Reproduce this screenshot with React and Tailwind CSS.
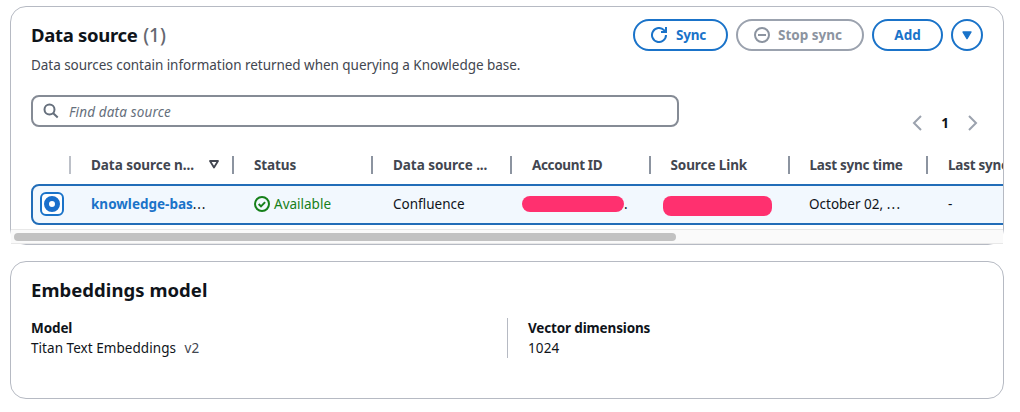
const columns = [
  { label: "Data source n", dots: true, width: "w-[163px]", tracking: "tracking-[-0.05px]", sorted: true },
  { label: "Status", width: "w-[139px]", tracking: "tracking-[-0.1px]" },
  { label: "Data source ", dots: true, width: "w-[139px]", tracking: "tracking-[-0.05px]" },
  { label: "Account ID", width: "w-[138.5px]", tracking: "tracking-[-0.35px]" },
  { label: "Source Link", width: "w-[139px]", tracking: "tracking-[-0.1px]" },
  { label: "Last sync time", width: "w-[138.5px]", tracking: "tracking-[-0.25px]" },
];

function Divider() {
  return <span className="h-[18px] w-[2px] shrink-0 bg-[#8c94a0]" />;
}

function Header() {
  return (
    <div className="flex h-8 items-center justify-between">
      <h2 className="text-[18.5px] font-bold tracking-[-0.3px] text-[#0f141a]">
        Data source <span className="ml-px text-[19px] font-medium tracking-normal text-[#656871]">(1)</span>
      </h2>
      <div className="flex gap-2 text-[13.5px] font-bold">
        <button className="flex h-8 w-[95px] items-center rounded-full border-2 border-[#1a73c9] pl-4 text-[#1a73c9]">
          <svg width="16" height="16" viewBox="0 0 16 16" fill="none" stroke="currentColor" strokeWidth="2">
            <path d="M15 8a7 7 0 1 1-2-4.9l1.5 1.8" />
            <path d="M10 5h5V0" />
          </svg>
          <span className="ml-[9px] pt-px tracking-[-0.2px]">Sync</span>
        </button>
        <button className="flex h-8 w-32 items-center rounded-full border-2 border-[#9ba2ae] pl-4 text-[#8c94a0]">
          <svg width="16" height="16" viewBox="0 0 16 16" fill="none" stroke="currentColor" strokeWidth="2">
            <circle cx="8" cy="8" r="7" />
            <path d="M4 8h8" />
          </svg>
          <span className="ml-2 pt-px whitespace-nowrap">Stop sync</span>
        </button>
        <button className="flex h-8 w-[71px] items-center justify-center rounded-full border-2 border-[#1a73c9] pt-px text-[#1a73c9]">
          Add
        </button>
        <button className="flex h-8 w-8 items-center justify-center rounded-full border-2 border-[#1a73c9] text-[#1a73c9]">
          <svg width="10" height="9" viewBox="0 0 10 9" fill="currentColor" stroke="currentColor" strokeWidth="1.4" strokeLinejoin="round">
            <path d="M1 1h8L5 7.6z" />
          </svg>
        </button>
      </div>
    </div>
  );
}

function Toolbar() {
  return (
    <div className="mt-[20px] flex">
      <div className="flex h-8 w-[648px] items-center rounded-lg border-2 border-[#858b95] pl-[10px]">
        <svg width="16" height="16" viewBox="0 0 16 16" fill="none" stroke="#656f7c" strokeWidth="2">
          <circle cx="6.5" cy="6.5" r="5" />
          <path d="M10.2 10.2l4.5 4.3" />
        </svg>
        <span className="ml-[10px] pt-[2px] text-[13.5px] tracking-[0.15px] text-[#656f7c] italic">Find data source</span>
      </div>
      <div className="mt-[12px] ml-[233px] flex h-8 items-center">
        <svg width="10" height="16" viewBox="0 0 10 16" fill="none" stroke="#9ba2ae" strokeWidth="2">
          <path d="M9 1L2 8l7 7" />
        </svg>
        <span className="w-[46px] text-center text-[13.5px] font-bold text-[#0f141a]">1</span>
        <svg width="10" height="16" viewBox="0 0 10 16" fill="none" stroke="#9ba2ae" strokeWidth="2">
          <path d="M1 1l7 7-7 7" />
        </svg>
      </div>
    </div>
  );
}

function TableHead() {
  return (
    <div className="flex h-[39px] w-[1100px] items-center pl-[38px] text-[13.5px] font-bold whitespace-nowrap text-[#424650]">
      <span className="h-[18px] w-[2px] shrink-0 bg-[#bcc0c8]" />
      {columns.map((column) => (
        <div
          key={column.label}
          className={`flex shrink-0 items-center justify-between pl-5 ${column.width} ${column.tracking}`}
        >
          <span className="pt-[2px] whitespace-pre">
            {column.label}
            {column.dots && "..."}
          </span>
          <div className="flex items-center gap-[13px]">
            {column.sorted && (
              <svg width="10" height="9" viewBox="0 0 10 9" fill="none" stroke="#424650" strokeWidth="1.8" strokeLinejoin="round">
                <path d="M1 1h8L5 7.5z" />
              </svg>
            )}
            <Divider />
          </div>
        </div>
      ))}
      <span className="pt-[2px] pl-5 tracking-[-0.25px]">Last sync</span>
    </div>
  );
}

function TableRow() {
  return (
    <div className="flex h-[41px] w-[1100px] items-center rounded-lg border-2 border-[#226db8] bg-[#f2f8fe] pb-px text-[13.5px] whitespace-nowrap text-[#0f141a]">
      <div className="ml-[7px] flex h-6 w-6 shrink-0 items-center justify-center rounded-md border-2 border-[#1a73c9] bg-white">
        <span className="h-4 w-4 rounded-full border-[5px] border-[#1a6fcb] bg-white" />
      </div>
      <div className="ml-[27px] w-[163px] shrink-0">
        <span className="font-bold text-[#1a73c9]">knowledge-bas</span>
        <span className="tracking-[0.9px]">...</span>
      </div>
      <div className="flex w-[139px] shrink-0 items-center gap-1 text-[#16801a]">
        <svg width="16" height="16" viewBox="0 0 16 16" fill="none" stroke="currentColor" strokeWidth="2">
          <circle cx="8" cy="8" r="7" />
          <path d="M4.7 8l2.3 2.4 4.1-4.3" />
        </svg>
        Available
      </div>
      <div className="w-[129px] shrink-0">Confluence</div>
      <div className="flex w-[141px] shrink-0 items-center">
        <span className="h-4 w-[102px] rounded-lg bg-[#ff306f]" />.
      </div>
      <div className="w-[146px] shrink-0">
        <div className="mt-[4px] h-5 w-[109px] rounded-lg bg-[#ff306f]" />
      </div>
      <div className="w-[139px] shrink-0">
        October 02, <span className="tracking-[1.3px]">...</span>
      </div>
      <div>-</div>
    </div>
  );
}

export default function App() {
  return (
    <main className="h-[412px] overflow-hidden bg-white px-[10px] pt-[6px] font-['Noto_Sans',sans-serif]">
      <section className="flex h-[239px] w-[994px] flex-col rounded-2xl border border-[#b6bac3]">
        <div className="px-5 pt-3">
          <Header />
          <p className="mt-[4px] text-[13.5px] leading-5 tracking-[-0.04px] text-[#424650]">
            Data sources contain information returned when querying a Knowledge base.
          </p>
          <Toolbar />
        </div>
        <div className="mt-[6px] overflow-hidden pl-5">
          <TableHead />
          <TableRow />
        </div>
        <div className="mt-1 flex h-[15px] shrink-0 items-center border-y border-[#e8e8e8] bg-[#fafafa] pl-[3px]">
          <div className="h-2 w-[662px] rounded-full bg-[#c2c2c2]" />
        </div>
      </section>
      <section className="mt-4 h-[138px] w-[994px] rounded-2xl border border-[#b6bac3] px-5 pt-[14px] text-[#0f141a]">
        <h2 className="text-[18.5px] leading-7 font-bold tracking-[0.05px]">Embeddings model</h2>
        <div className="mt-[14px] flex h-10 text-[13.5px] leading-5">
          <div className="w-[476px]">
            <h3 className="font-bold tracking-[-0.1px]">Model</h3>
            <p className="tracking-[0.05px]">
              Titan Text Embeddings <span className="ml-[5px] text-[#424650]">v2</span>
            </p>
          </div>
          <div className="border-l border-[#b6bac3] pl-5">
            <h3 className="font-bold tracking-[-0.15px]">Vector dimensions</h3>
            <p className="tracking-[0.1px]">1024</p>
          </div>
        </div>
      </section>
    </main>
  );
}
